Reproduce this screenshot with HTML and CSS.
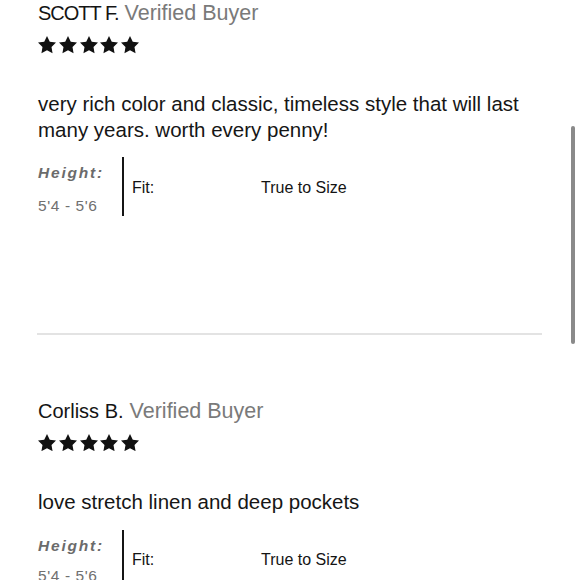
FILE: index.html
```html
<!DOCTYPE html>
<html lang="en">
<head>
<meta charset="utf-8">
<title>Reviews</title>
<link rel="stylesheet" href="styles.css">
</head>
<body>
<main class="reviews">
  <article class="review">
    <div class="review-head"><span class="name name-caps">SCOTT F.</span><span class="verified">Verified Buyer</span></div>
    <div class="stars" aria-label="5 out of 5 stars">
      <svg class="star" viewBox="2 2 20 19.02"><path d="M12 2l3.09 6.26L22 9.27l-5 4.87 1.18 6.88L12 17.77l-6.18 3.25L7 14.14 2 9.27l6.91-1.01L12 2z"/></svg>
      <svg class="star" viewBox="2 2 20 19.02"><path d="M12 2l3.09 6.26L22 9.27l-5 4.87 1.18 6.88L12 17.77l-6.18 3.25L7 14.14 2 9.27l6.91-1.01L12 2z"/></svg>
      <svg class="star" viewBox="2 2 20 19.02"><path d="M12 2l3.09 6.26L22 9.27l-5 4.87 1.18 6.88L12 17.77l-6.18 3.25L7 14.14 2 9.27l6.91-1.01L12 2z"/></svg>
      <svg class="star" viewBox="2 2 20 19.02"><path d="M12 2l3.09 6.26L22 9.27l-5 4.87 1.18 6.88L12 17.77l-6.18 3.25L7 14.14 2 9.27l6.91-1.01L12 2z"/></svg>
      <svg class="star" viewBox="2 2 20 19.02"><path d="M12 2l3.09 6.26L22 9.27l-5 4.87 1.18 6.88L12 17.77l-6.18 3.25L7 14.14 2 9.27l6.91-1.01L12 2z"/></svg>
    </div>
    <p class="review-body">very rich color and classic, timeless style that will last many years. worth every penny!</p>
    <div class="specs">
      <div class="spec-height">
        <div class="spec-label">Height:</div>
        <div class="spec-value">5'4 - 5'6</div>
      </div>
      <div class="spec-fit">
        <span class="fit-label">Fit:</span>
        <span class="fit-value">True to Size</span>
      </div>
    </div>
  </article>

  <hr class="divider">

  <article class="review review-second">
    <div class="review-head"><span class="name">Corliss B.</span><span class="verified">Verified Buyer</span></div>
    <div class="stars" aria-label="5 out of 5 stars">
      <svg class="star" viewBox="2 2 20 19.02"><path d="M12 2l3.09 6.26L22 9.27l-5 4.87 1.18 6.88L12 17.77l-6.18 3.25L7 14.14 2 9.27l6.91-1.01L12 2z"/></svg>
      <svg class="star" viewBox="2 2 20 19.02"><path d="M12 2l3.09 6.26L22 9.27l-5 4.87 1.18 6.88L12 17.77l-6.18 3.25L7 14.14 2 9.27l6.91-1.01L12 2z"/></svg>
      <svg class="star" viewBox="2 2 20 19.02"><path d="M12 2l3.09 6.26L22 9.27l-5 4.87 1.18 6.88L12 17.77l-6.18 3.25L7 14.14 2 9.27l6.91-1.01L12 2z"/></svg>
      <svg class="star" viewBox="2 2 20 19.02"><path d="M12 2l3.09 6.26L22 9.27l-5 4.87 1.18 6.88L12 17.77l-6.18 3.25L7 14.14 2 9.27l6.91-1.01L12 2z"/></svg>
      <svg class="star" viewBox="2 2 20 19.02"><path d="M12 2l3.09 6.26L22 9.27l-5 4.87 1.18 6.88L12 17.77l-6.18 3.25L7 14.14 2 9.27l6.91-1.01L12 2z"/></svg>
    </div>
    <p class="review-body">love stretch linen and deep pockets</p>
    <div class="specs specs-second">
      <div class="spec-height">
        <div class="spec-label">Height:</div>
        <div class="spec-value">5'4 - 5'6</div>
      </div>
      <div class="spec-fit">
        <span class="fit-label">Fit:</span>
        <span class="fit-value">True to Size</span>
      </div>
    </div>
  </article>
</main>
<div class="scrollbar"></div>
</body>
</html>
```

FILE: styles.css
```css
html, body {
  margin: 0;
  padding: 0;
  height: 100%;
  overflow: hidden;
  background: #ffffff;
}

body {
  font-family: "Liberation Sans", Arial, sans-serif;
  color: #141414;
  position: relative;
}

.reviews {
  padding: 1px 38px 0 38px;
}

.review-head {
  font-size: 20px;
  line-height: 24px;
  display: flex;
  align-items: baseline;
  white-space: nowrap;
}

.name {
  color: #141414;
  margin-right: 6px;
}

.name-caps {
  letter-spacing: -1px;
  margin-right: 6px;
}

.verified {
  color: #7a7a7a;
  font-size: 21.5px;
}

.stars {
  display: flex;
  gap: 2.75px;
  margin-top: 11px;
  height: 18px;
  align-items: center;
}

.star {
  width: 18px;
  height: 17.2px;
  fill: #111111;
  display: block;
}

.review-body {
  margin: 37px 0 0 0;
  font-size: 20.5px;
  line-height: 26px;
  color: #161616;
}

.specs {
  display: flex;
  margin-top: 14px;
}

.specs-second {
  margin-top: 15px;
}

.spec-height {
  width: 84px;
  padding-top: 6px;
  height: 53px;
}

.spec-label {
  font-size: 15.5px;
  line-height: 20px;
  font-weight: bold;
  font-style: italic;
  letter-spacing: 1.8px;
  color: #6b6b6b;
}

.spec-value {
  margin-top: 13px;
  font-size: 15.5px;
  line-height: 20px;
  letter-spacing: 0.6px;
  color: #707070;
}

.specs-second .spec-value {
  margin-top: 10px;
}

.spec-fit {
  border-left: 2px solid #151515;
  height: 59px;
  padding-left: 8px;
  display: flex;
  align-items: center;
  font-size: 16px;
  line-height: 20px;
  padding-top: 2px;
  box-sizing: border-box;
}

.fit-label {
  width: 129px;
}

.divider {
  border: 0;
  height: 1.5px;
  background: #e3e3e3;
  margin: 117px 0 0 -1px;
  width: 505px;
}

.review-second {
  margin-top: 64px;
}

.scrollbar {
  position: absolute;
  left: 571px;
  top: 126px;
  width: 4px;
  height: 218px;
  border-radius: 2px;
  background: #8a8a8a;
}
```
